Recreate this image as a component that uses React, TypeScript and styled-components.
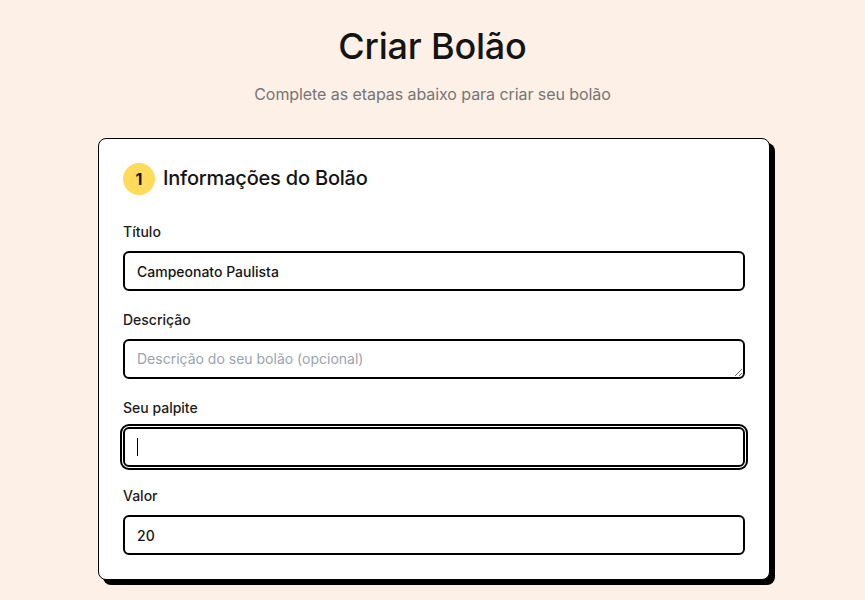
import React from 'react';
import styled, { createGlobalStyle, css } from 'styled-components';

const GlobalStyle = createGlobalStyle`
  * {
    box-sizing: border-box;
  }
  body {
    margin: 0;
    background: #fdf0e7;
    font-family: Inter, "Noto Sans", sans-serif;
    color: #141414;
  }
`;

const Page = styled.div`
  min-height: 600px;
  padding: 26px 16px 0;
  display: flex;
  flex-direction: column;
  align-items: center;
`;

const Title = styled.h1`
  margin: 0;
  font-size: 36px;
  line-height: 40px;
  font-weight: 500;
  letter-spacing: -0.2px;
`;

const Subtitle = styled.p`
  margin: 16px 0 32px;
  font-size: 16px;
  line-height: 24px;
  color: #767676;
  letter-spacing: -0.07px;
`;

const Card = styled.section`
  width: 672px;
  margin-left: 3px;
  background: #fff;
  border: 1px solid #000;
  border-radius: 8px;
  box-shadow: 5px 5px 0 #000;
  padding: 24px;
`;

const StepHeader = styled.div`
  display: flex;
  align-items: center;
  gap: 8px;
  margin-bottom: 28px;
`;

const StepBadge = styled.span`
  width: 32px;
  height: 32px;
  border-radius: 50%;
  background: #fedb5b;
  display: flex;
  align-items: center;
  justify-content: center;
  font-size: 16px;
  font-weight: 700;
`;

const StepTitle = styled.h2`
  margin: 0 0 2px;
  font-size: 20px;
  line-height: 28px;
  font-weight: 500;
  letter-spacing: -0.2px;
`;

const Fields = styled.div`
  display: flex;
  flex-direction: column;
  gap: 20px;
`;

const Field = styled.label`
  display: flex;
  flex-direction: column;
  gap: 8px;
`;

const Label = styled.span`
  font-size: 14px;
  line-height: 20px;
  font-weight: 500;
  color: #1c1c1c;
  margin-top: -1px;
  margin-bottom: 1px;
`;

const controlStyle = css<{ $focused?: boolean }>`
  width: 100%;
  height: 40px;
  border: 2px solid #000;
  border-radius: 6px;
  padding: 0 12px;
  font-family: inherit;
  font-size: 14px;
  font-weight: 500;
  color: #141414;
  background: #fff;
  outline: none;
  &::placeholder {
    color: #9ca3af;
    font-weight: 400;
  }
  ${({ $focused }) =>
    $focused &&
    css`
      box-shadow: 0 0 0 1px #fff, 0 0 0 3px #000;
    `}
`;

const Input = styled.input<{ $focused?: boolean }>`
  ${controlStyle}
`;

const TextArea = styled.textarea<{ $focused?: boolean }>`
  ${controlStyle}
  display: block;
  padding: 8px 12px;
  line-height: 20px;
  resize: vertical;
`;

const InputWrap = styled.div`
  position: relative;
`;

// fake blinking caret shown in the focused empty field
const Caret = styled.span`
  position: absolute;
  left: 14px;
  top: 11px;
  width: 1px;
  height: 18px;
  background: #000;
  pointer-events: none;
`;

const App = () => {
  return (
    <>
      <GlobalStyle />
      <Page>
        <Title>Criar Bolão</Title>
        <Subtitle>Complete as etapas abaixo para criar seu bolão</Subtitle>
        <Card>
          <StepHeader>
            <StepBadge>1</StepBadge>
            <StepTitle>Informações do Bolão</StepTitle>
          </StepHeader>
          <Fields>
            <Field>
              <Label>Título</Label>
              <Input defaultValue="Campeonato Paulista" />
            </Field>
            <Field>
              <Label>Descrição</Label>
              <TextArea rows={1} placeholder="Descrição do seu bolão (opcional)" />
            </Field>
            <Field>
              <Label>Seu palpite</Label>
              <InputWrap>
                <Input $focused />
                <Caret />
              </InputWrap>
            </Field>
            <Field>
              <Label>Valor</Label>
              <Input defaultValue="20" />
            </Field>
          </Fields>
        </Card>
      </Page>
    </>
  );
};

export default App;
